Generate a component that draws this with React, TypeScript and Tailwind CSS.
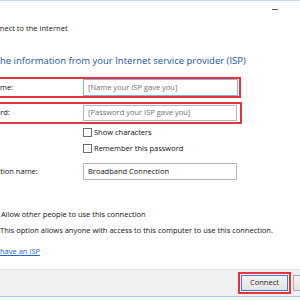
import React from "react";

const Checkbox: React.FC = () => (
  <span className="inline-block w-[9px] h-[9px] border border-[#6f6f6f] bg-white shrink-0"></span>
);

const App: React.FC = () => {
  return (
    <div className="w-[300px] h-[300px] overflow-hidden bg-white flex flex-col font-['Open_Sans',sans-serif] text-[7.5px] text-[#111] border-t border-[#c7d7ee]">
      {/* title bar */}
      <div className="relative h-[19px] shrink-0">
        <span className="absolute left-[272px] top-[8px] w-[6px] h-[1px] bg-[#555]"></span>
      </div>
      <div className="-ml-[14px] h-[18px] flex items-center text-[7.5px] text-[#222] whitespace-nowrap">
        Connect to the Internet
      </div>

      <div className="-ml-[26px] flex flex-col whitespace-nowrap">
        <h1 className="mt-[15px] -ml-[1px] h-[16px] leading-[16px] text-[9.5px] text-[#2152a8] font-normal">
          Type the information from your Internet service provider (ISP)
        </h1>

        {/* user name */}
        <div className="mt-[8px] -ml-[4px] w-[271px] h-[21px] border-2 border-[#e8323c] pl-[2px] flex items-center">
          <span className="w-[109px] -ml-[1px]">User name:</span>
          <div className="ml-[1px] w-[155px] h-[17px] border border-[#7fb3e6] flex items-center pl-[4px] text-[#707070]">
            [Name your ISP gave you]
          </div>
        </div>

        {/* password */}
        <div className="mt-[4px] -ml-[4px] w-[272px] h-[22px] border-2 border-[#e8323c] pl-[2px] flex items-center">
          <span className="w-[109px]">Password:</span>
          <div className="w-[154px] h-[16px] border border-[#b4b6bc] flex items-center pl-[4px] text-[#707070]">
            [Password your ISP gave you]
          </div>
        </div>

        <div className="mt-[4px] ml-[109px] flex flex-col gap-[7px]">
          <label className="flex items-center gap-[2px] h-[9px]">
            <Checkbox />
            <span>Show characters</span>
          </label>
          <label className="flex items-center gap-[2px] h-[9px]">
            <Checkbox />
            <span>Remember this password</span>
          </label>
        </div>

        <div className="mt-[10px] flex items-center h-[17px]">
          <span className="w-[109px]">Connection name:</span>
          <div className="w-[154px] h-[17px] border border-[#b4b6bc] flex items-center pl-[4px]">
            Broadband Connection
          </div>
        </div>

        <div className="mt-[30px] flex items-center h-[10px]">
          <span className="w-[27px] flex items-center gap-[3px]">
            <Checkbox />
            <svg width="10" height="10" viewBox="0 0 10 10">
              <path d="M5 0.5 L9 2 V5 C9 7.5 7 9 5 9.5 C3 9 1 7.5 1 5 V2 Z" fill="#2f6fd0" />
              <path d="M5 0.5 V9.5 C7 9 9 7.5 9 5 H5 Z" fill="#f2c230" />
            </svg>
          </span>
          <span>Allow other people to use this connection</span>
        </div>
        <div className="mt-[5px] ml-[26px] h-[10px] leading-[10px]">
          This option allows anyone with access to this computer to use this connection.
        </div>

        <div className="mt-[11px] ml-[2px] h-[10px] leading-[10px]">
          <a className="text-[#1c66c9] underline">I don't have an ISP</a>
        </div>
      </div>

      {/* footer */}
      <div className="mt-auto h-[27px] shrink-0 bg-[#f0f0f0] border-t border-[#e3e3e3] flex items-center justify-end gap-[2px] -mr-[40px]">
        <div className="border-2 border-[#e8323c] p-[1px]">
          <button className="w-[47px] h-[16px] border border-[#3d7fc8] bg-gradient-to-b from-[#f3f3f3] to-[#e2e2e2] text-[7.5px] text-[#222] flex items-center justify-center">
            Connect
          </button>
        </div>
        <button className="w-[47px] h-[16px] border border-[#adadad] bg-gradient-to-b from-[#f3f3f3] to-[#e2e2e2] text-[7.5px] text-[#222] flex items-center justify-center">
          Cancel
        </button>
      </div>
      <div className="h-[1px] bg-[#a9c3e6] shrink-0"></div>
      <div className="h-[3px] bg-[#f4f7fb] shrink-0"></div>
    </div>
  );
};

export default App;
